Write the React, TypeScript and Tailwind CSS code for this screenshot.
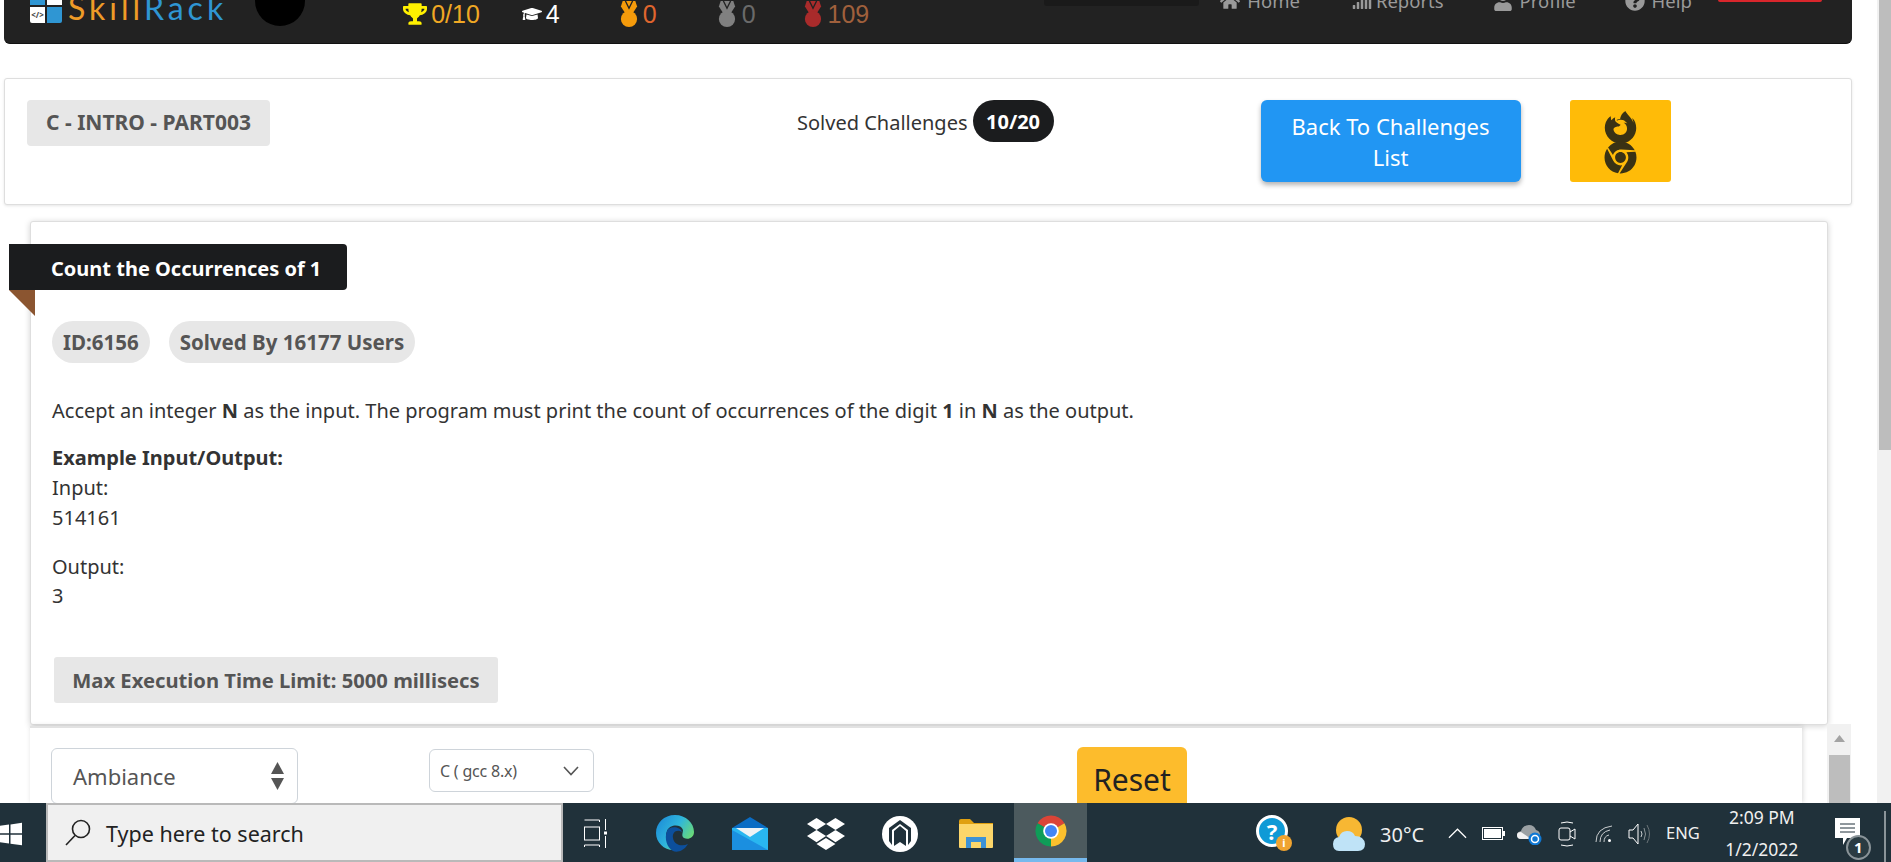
import React from 'react';
import {
  FaTrophy,
  FaGraduationCap,
  FaHome,
  FaSignal,
  FaUser,
  FaQuestionCircle,
  FaFirefoxBrowser,
  FaChrome,
  FaDropbox,
} from 'react-icons/fa';

function Medal({ color }: { color: string }) {
  return (
    <svg viewBox="0 0 20 30" className="w-[18px] h-[27px]" fill={color}>
      <path d="M3 0 L17 0 L19 6 L14 14 L6 14 L1 6 Z" />
      <path d="M6 0 L10 8 L14 0" fill="none" stroke="#222222" strokeWidth="1.500" />
      <circle cx="10" cy="20" r="9" />
    </svg>
  );
}

function WindowsLogo() {
  return (
    <svg viewBox="0 0 23 24" className="w-[23px] h-[24px]" fill="#fff">
      <path d="M0 4 L10 2.600 L10 11.300 L0 11.300 Z" />
      <path d="M11.500 2.400 L23 0.800 L23 11.300 L11.500 11.300 Z" />
      <path d="M0 12.800 L10 12.800 L10 21.500 L0 20.100 Z" />
      <path d="M11.500 12.800 L23 12.800 L23 23.200 L11.500 21.700 Z" />
    </svg>
  );
}

function EdgeLogo() {
  return (
    <svg viewBox="0 0 40 40" className="w-[40px] h-[40px]">
      <defs>
        <linearGradient id="edgeBody" x1="0" y1="0" x2="1" y2="0.6">
          <stop offset="0" stopColor="#1a86d8" />
          <stop offset="0.55" stopColor="#2fb6dc" />
          <stop offset="1" stopColor="#6fdc6f" />
        </linearGradient>
      </defs>
      <path d="M20 1 C31 1 39 9 39 18 C39 24 33 26 29 24 C26 22 28 19 28 16 C26 10 15 10 12 17 C9 24 13 32 20 36 C10 37 1 29 1 19 C1 9 9 1 20 1 Z" fill="url(#edgeBody)" />
      <path d="M12 17 C14 12 25 12 27 18 C22 15 17 18 18 24 C19 31 27 33 33 30 C29 37 22 39 18 37 C12 34 9 24 12 17 Z" fill="#0c4f9c" />
    </svg>
  );
}

function MailLogo() {
  return (
    <svg viewBox="0 0 36 33" className="w-[36px] h-[33px]">
      <path d="M18 0 L36 11 L36 33 L0 33 L0 11 Z" fill="#0a6cc4" />
      <path d="M0 11 L36 11 L36 33 L0 33 Z" fill="#29b6f0" />
      <path d="M4 11 L32 11 L18 20 Z" fill="#eef2f5" />
      <path d="M0 13 L36 33 L0 33 Z" fill="#1b8fe0" />
    </svg>
  );
}

function ArchLogo() {
  return (
    <svg viewBox="0 0 36 36" className="w-[36px] h-[36px]">
      <circle cx="18" cy="18" r="18" fill="#fff" />
      <path d="M18 4 L7 12 L7 25 L10 29 L10 14 L18 8 L26 14 L26 29 L29 25 L29 12 Z" fill="#20313a" />
      <path d="M12 15 L18 10 L24 15 L24 30 L18 26 L12 30 Z" fill="#20313a" />
      <path d="M14 16 L18 12.500 L22 16 L22 26 L18 23 L14 26 Z" fill="#20313a" />
    </svg>
  );
}

function FolderLogo() {
  return (
    <svg viewBox="0 0 34 30" className="w-[34px] h-[30px]">
      <path d="M0 2 Q0 0 2 0 L11 0 L15 4 L34 4 L34 10 L0 10 Z" fill="#e0a010" />
      <path d="M0 5 L34 5 L34 28 Q34 29 33 29 L1 29 Q0 29 0 28 Z" fill="#fcd66a" />
      <path d="M7 29 L7 18 L27 18 L27 29 L22 29 L22 23 L12 23 L12 29 Z" fill="#3d92d6" />
    </svg>
  );
}

function ChromeLogo() {
  return (
    <svg viewBox="0 0 48 48" className="w-[34px] h-[34px]">
      <path d="M24 24 L43 13 A22 22 0 0 0 5 13 Z" fill="#db4437" />
      <path d="M24 24 L43 13 A22 22 0 0 1 24 46 Z" fill="#fbc02d" />
      <path d="M24 24 L24 46 A22 22 0 0 1 5 13 Z" fill="#0f9d58" />
      <circle cx="24" cy="24" r="11" fill="#fff" />
      <circle cx="24" cy="24" r="8.500" fill="#4285f4" />
    </svg>
  );
}

function HelpBadge() {
  return (
    <div className="relative w-[36px] h-[38px]">
      <div className="w-[32px] h-[32px] rounded-full bg-[#0f9ad6] border-[3px] border-white flex items-center justify-center text-white font-bold text-[22px] leading-none font-['Noto_Sans',sans-serif]">
        ?
      </div>
      <div className="absolute right-0 bottom-[2px] w-[16px] h-[16px] rounded-full bg-[#f0a430] flex items-center justify-center text-white font-bold text-[11px] leading-none font-['Noto_Sans',sans-serif]">
        i
      </div>
    </div>
  );
}

function WeatherLogo() {
  return (
    <svg viewBox="0 0 32 36" className="w-[32px] h-[36px]">
      <circle cx="16" cy="14" r="13" fill="#f7b733" />
      <path d="M6 35 Q0 35 0 28 Q0 22 6 21 Q8 15 14 15 Q20 15 22 20 Q31 20 32 28 Q32 35 25 35 Z" fill="#bfe3f7" />
    </svg>
  );
}

function SystemTray() {
  return (
    <div className="flex items-center">
      {/* chevron */}
      <svg viewBox="0 0 20 11" className="w-[19px] h-[11px]" fill="none" stroke="#fff" strokeWidth="1.300">
        <path d="M1 10 L10 1 L19 10" />
      </svg>
      {/* battery */}
      <svg viewBox="0 0 23 13" className="w-[23px] h-[13px] ml-[15px]">
        <rect x="0.500" y="0.500" width="20" height="12" fill="none" stroke="#fff" />
        <rect x="2" y="2" width="17" height="9" fill="#fff" />
        <rect x="21" y="4" width="2" height="5" fill="#fff" />
      </svg>
      {/* onedrive sync */}
      <svg viewBox="0 0 25 22" className="w-[25px] h-[22px] ml-[12px]">
        <path d="M4 16 Q0 16 0 12 Q0 9 4 8 Q6 2 12 2 Q17 2 19 7 Q23 8 23 12 L23 16 Z" fill="#9aa0a3" />
        <path d="M4 16 Q0 16 0 12 Q0 9 4 9 L14 16 Z" fill="#f2f2f2" />
        <circle cx="18" cy="16" r="6.500" fill="#0f78d4" />
        <circle cx="18" cy="16" r="3.500" fill="none" stroke="#fff" strokeWidth="1.500" />
      </svg>
      {/* meet now */}
      <svg viewBox="0 0 18 26" className="w-[18px] h-[26px] ml-[16px]" fill="none" stroke="#fff" strokeWidth="1">
        <path d="M3 2 Q9 0 15 2" />
        <path d="M3 24 Q9 26 15 24" />
        <rect x="1" y="7" width="11" height="12" rx="2" />
        <path d="M12 11 L17 8 L17 18 L12 15" />
      </svg>
      {/* wifi */}
      <svg viewBox="0 0 18 18" className="w-[18px] h-[18px] ml-[19px]" fill="none" stroke="#c9cdcf" strokeWidth="1">
        <path d="M1 17 Q1 3 17 1" />
        <path d="M5 17 Q5 7 15 5" />
        <path d="M9 17 Q9 11 14 10" />
        <circle cx="14.500" cy="15.500" r="1.500" fill="#fff" stroke="none" />
      </svg>
      {/* speaker */}
      <svg viewBox="0 0 23 22" className="w-[23px] h-[22px] ml-[15px]" fill="none" stroke="#fff" strokeWidth="1">
        <path d="M1 7 L5 7 L10 1 L10 21 L5 15 L1 15 Z" />
        <path d="M13 8 Q15 11 13 14" stroke="#c9cdcf" />
        <path d="M16 5 Q19 11 16 17" stroke="#8b9396" />
        <path d="M19 2 Q24 11 19 20" stroke="#6b7478" />
      </svg>
    </div>
  );
}

function Taskbar() {
  return (
    <div className="h-[59px] shrink-0 bg-[#20313a] flex items-stretch text-white font-['Noto_Sans',sans-serif]">
      <div className="w-[47px] flex items-center -ml-[1px] pt-[2px]">
        <WindowsLogo />
      </div>
      <div className="w-[517px] bg-[#f0f0f0] border-2 border-[#b9b9b9] flex items-center pl-[17px] pt-[3px]">
        <svg viewBox="0 0 26 27" className="w-[26px] h-[27px] -mt-[3px]" fill="none" stroke="#222" strokeWidth="1.600">
          <circle cx="16" cy="10" r="8.500" />
          <path d="M10 16.500 L1 26" />
        </svg>
        <span className="ml-[15px] text-[21.5px] text-[#222]">Type here to search</span>
      </div>
      {/* task view */}
      <div className="ml-[21px] w-[24px] flex items-center pt-[2px]">
        <svg viewBox="0 0 24 29" className="w-[24px] h-[29px]" fill="none" stroke="#fff" strokeWidth="1">
          <path d="M0.500 1 L15.500 1 L15.500 3" />
          <rect x="0.500" y="8" width="15" height="13" />
          <path d="M0.500 28 L0.500 26 L15.500 26 L15.500 28" />
          <path d="M21.500 0 L21.500 11 M21.500 17 L21.500 29" />
          <rect x="20" y="12.500" width="3" height="3" fill="#fff" stroke="none" />
        </svg>
      </div>
      <div className="ml-[47px] flex items-center pt-[2px]">
        <EdgeLogo />
      </div>
      <div className="ml-[37px] flex items-center pt-[2px]">
        <MailLogo />
      </div>
      <div className="ml-[39px] flex items-center pt-[2px]">
        <FaDropbox className="text-[38px] text-white" />
      </div>
      <div className="ml-[37px] flex items-center pt-[2px]">
        <ArchLogo />
      </div>
      <div className="ml-[41px] flex items-center pt-[2px]">
        <FolderLogo />
      </div>
      <div className="ml-[21px] w-[73px] bg-[#4c5a5e] border-b-4 border-[#76b9ed] flex items-center justify-center">
        <ChromeLogo />
      </div>
      <div className="ml-[169px] flex items-center pt-[2px]">
        <HelpBadge />
      </div>
      <div className="ml-[41px] flex items-center pt-[2px]">
        <WeatherLogo />
      </div>
      <span className="ml-[15px] self-center pt-[4px] text-[20px] text-[#f0f0f0] leading-none">30°C</span>
      <div className="ml-[24px] flex items-center pt-[2px]">
        <SystemTray />
      </div>
      <span className="ml-[15px] self-center pt-[2px] text-[16.5px] leading-none text-[#f0f0f0]">ENG</span>
      <div className="ml-[25px] w-[74px] flex flex-col items-center justify-center text-[17.5px] leading-[32px] text-[#f0f0f0]">
        <span>2:09 PM</span>
        <span>1/2/2022</span>
      </div>
      {/* notifications */}
      <div className="ml-[36px] flex items-center relative">
        <svg viewBox="0 0 25 30" className="w-[25px] h-[30px]">
          <path d="M0 0 L25 0 L25 20 L12 20 L8 27 L8 20 L0 20 Z" fill="#fff" />
          <path d="M5 6 L20 6 M5 10 L20 10 M5 14 L20 14" stroke="#20313a" strokeWidth="1" />
        </svg>
        <span className="absolute left-[11px] top-[32px] w-[25px] h-[25px] rounded-full bg-[#2a3b42] border-2 border-[#8a9499] flex items-center justify-center text-[15px] font-bold leading-none">
          1
        </span>
      </div>
      <div className="ml-auto mt-[8px] w-[2px] bg-[#8a9499] mr-[5px]" />
    </div>
  );
}

function TopBar() {
  const navItems = [
    { icon: <FaHome />, label: 'Home', cls: 'ml-[21px]', gap: 'w-[27px]' },
    { icon: <FaSignal />, label: 'Reports', cls: 'ml-[52px]', gap: 'w-[24px]' },
    { icon: <FaUser />, label: 'Profile', cls: 'ml-[49px]', gap: 'w-[27px]' },
    { icon: <FaQuestionCircle />, label: 'Help', cls: 'ml-[49px]', gap: 'w-[27px]' },
  ];
  return (
    <div className="ml-[4px] w-[1848px] h-[44px] shrink-0 bg-[#222222] rounded-b-[6px] border-b border-[#111] overflow-hidden flex items-start">
      {/* Logo */}
      <div className="ml-[26px] -mt-[8px] grid grid-cols-2 gap-[2px] w-[32px]">
        <div className="h-[13px] bg-[#2f96d3]" />
        <div className="h-[13px] bg-white" />
        <div className="h-[16px] bg-white rounded-bl-[2px] flex items-center justify-center text-[8px] leading-none text-[#444] font-bold">
          {'</>'}
        </div>
        <div className="h-[16px] bg-[#2f96d3] rounded-br-[2px]" />
      </div>
      <div className="ml-[6px] -mt-[10px] text-[32px] tracking-[4px] leading-[36px] font-['Lato',sans-serif]">
        <span className="text-[#ee9b27]">Skill</span>
        <span className="text-[#2f96d3]">Rack</span>
      </div>
      <div className="ml-[28px] -mt-[26px] w-[50px] h-[52px] rounded-full bg-black" />

      {/* Stats */}
      <div className="ml-[98px] flex items-center text-[25px] leading-[28px] font-['Liberation_Sans',sans-serif]">
        <FaTrophy className="text-[#fff000] text-[24px]" />
        <span className="ml-[4px] text-[#f0a824]">0/10</span>
        <FaGraduationCap className="ml-[42px] text-white text-[20px]" />
        <span className="ml-[4px] text-white">4</span>
        <div className="ml-[60px]">
          <Medal color="#f59b0b" />
        </div>
        <span className="ml-[5px] text-[#e0662e]">0</span>
        <div className="ml-[61px]">
          <Medal color="#808080" />
        </div>
        <span className="ml-[6px] text-[#6a6a6a]">0</span>
        <div className="ml-[48px]">
          <Medal color="#a92b2b" />
        </div>
        <span className="ml-[6px] text-[#a0603c]">109</span>
      </div>

      <div className="ml-[175px] w-[155px] h-[6px] rounded-b-[3px] bg-[#1a1a1a]" />

      {/* Nav links */}
      <div className="-mt-[12px] flex items-center text-[18.5px] leading-[26px] text-[#9a9a9a] font-['Noto_Sans',sans-serif]">
        {navItems.map((item) => (
          <div key={item.label} className={`flex items-center ${item.cls}`}>
            <span className={`text-[20px] ${item.gap}`}>{item.icon}</span>
            <span>{item.label}</span>
          </div>
        ))}
      </div>
      <div className="ml-[26px] w-[104px] h-[2px] bg-[#d9262c] rounded-b-[2px]" />
    </div>
  );
}

function ProgressCard() {
  return (
    <div className="mt-[34px] ml-[4px] w-[1848px] h-[127px] shrink-0 bg-white border border-[#dedede] rounded-[3px] shadow-[0_1px_3px_rgba(0,0,0,0.1)] flex items-start pt-[21px] pl-[22px]">
      <div className="w-[243px] h-[46px] rounded-[4px] bg-[#e7e7e7] flex items-center justify-center font-bold text-[21px] text-[#555]">
        C - INTRO - PART003
      </div>
      <div className="ml-[527px] h-[42px] pt-[3px] flex items-center text-[20px] text-[#333]">Solved Challenges</div>
      <div className="ml-[5px] w-[81px] h-[42px] pt-[1px] rounded-full bg-[#1b1c1e] text-white font-bold text-[20px] flex items-center justify-center">
        10/20
      </div>
      <button className="ml-[207px] w-[260px] h-[82px] rounded-[6px] bg-[#2196f3] text-white text-[22px] leading-[31px] shadow-[0_3px_5px_rgba(0,0,0,0.3)] px-[20px] pt-[2px]">
        Back To Challenges List
      </button>
      <div className="ml-[49px] w-[101px] h-[82px] pt-[2px] rounded-[3px] bg-[#ffbb08] flex flex-col items-center justify-center text-[#3a3214] text-[33px]">
        <FaFirefoxBrowser className="-mb-[3px]" />
        <FaChrome />
      </div>
    </div>
  );
}

function ProblemCard() {
  return (
    <div className="mt-[16px] ml-[30px] w-[1798px] h-[504px] shrink-0 bg-white border border-[#dedede] rounded-[3px] shadow-[0_1px_6px_rgba(0,0,0,0.18)] flex flex-col items-start pl-[21px] text-[#333] text-[20px]">
      <div className="relative mt-[22px] -ml-[43px] w-[338px] h-[46px] pt-[3px] bg-[#1b1c1e] rounded-r-[4px] flex items-center pl-[42px] text-white font-bold text-[20px]">
        Count the Occurrences of 1
        <div className="absolute left-0 top-[46px] w-[26px] h-[26px] bg-[#8b5530] [clip-path:polygon(0_0,100%_0,100%_100%)]" />
      </div>
      <div className="mt-[31px] flex gap-[19px] font-bold text-[#555] text-[20.5px]">
        <div className="h-[42px] pt-[1px] px-[11px] rounded-full bg-[#e7e7e7] flex items-center">ID:6156</div>
        <div className="h-[42px] pt-[1px] px-[11px] rounded-full bg-[#e7e7e7] flex items-center">Solved By 16177 Users</div>
      </div>
      <p className="mt-[33px] leading-[30px]">
        Accept an integer <b>N</b> as the input. The program must print the count of occurrences of the digit <b>1</b> in <b>N</b> as the output.
      </p>
      <p className="mt-[17px] leading-[30px]">
        <b>Example Input/Output:</b>
        <br />
        Input:
        <br />
        514161
      </p>
      <p className="mt-[19px] leading-[29px]">
        Output:
        <br />3
      </p>
      <div className="mt-[47px] ml-[2px] w-[444px] h-[46px] rounded-[3px] bg-[#e7e7e7] flex items-center justify-center font-bold text-[#555] text-[20.2px]">
        Max Execution Time Limit: 5000 millisecs
      </div>
    </div>
  );
}

function EditorToolbar() {
  return (
    <div className="mt-[1px] ml-[30px] flex flex-1 min-h-0">
      <div className="w-[1772px] bg-white border-t-2 border-[#e2e2e2] shadow-[1px_0_5px_rgba(0,0,0,0.15)] flex items-start pt-[20px] pl-[21px] overflow-hidden">
        <div className="w-[247px] h-[56px] shrink-0 border border-[#ced4da] rounded-[6px] flex items-center justify-between pl-[21px] pr-[13px] text-[22px] text-[#555]">
          Ambiance
          <svg viewBox="0 0 13 32" className="w-[13px] h-[32px]" fill="#555">
            <path d="M6.500 2 L13 14 L0 14 Z" />
            <path d="M0 18 L13 18 L6.500 30 Z" />
          </svg>
        </div>
        <div className="ml-[131px] mt-[1px] w-[165px] h-[43px] shrink-0 border border-[#ced4da] rounded-[6px] flex items-center justify-between pl-[10px] pr-[14px] text-[16px] text-[#555] tracking-[-0.2px]">
          C ( gcc 8.x)
          <svg viewBox="0 0 16 10" className="w-[16px] h-[10px]" fill="none" stroke="#555" strokeWidth="1.600">
            <path d="M1 1 L8 8.500 L15 1" />
          </svg>
        </div>
        <button className="ml-[483px] w-[110px] h-[70px] shrink-0 -mt-[1px] rounded-[6px] bg-[#fdbc2c] text-[#222] text-[30px] pb-[5px]">
          Reset
        </button>
      </div>
      <div className="ml-[25px] w-[24px] -mt-[2px] bg-[#f1f1f1] flex flex-col items-center">
        <svg viewBox="0 0 11 7" className="mt-[11px] w-[11px] h-[7px]" fill="#a3a3a3">
          <path d="M5.500 0 L11 7 L0 7 Z" />
        </svg>
        <div className="mt-[13px] w-[21px] flex-1 bg-[#bdbdbd]" />
      </div>
    </div>
  );
}

export default function App() {
  return (
    <div className="w-[1891px] h-[862px] overflow-hidden bg-white flex flex-col font-['Noto_Sans',sans-serif]">
      <div className="flex flex-1 min-h-0">
        <div className="w-[1877px] flex flex-col overflow-hidden">
          <TopBar />
          <ProgressCard />
          <ProblemCard />
          <EditorToolbar />
        </div>
        <div className="w-[14px] bg-[#f1f1f1] flex justify-end">
          <div className="w-[12px] h-[450px] bg-[#bdbdbd]" />
        </div>
      </div>
      <Taskbar />
    </div>
  );
}
